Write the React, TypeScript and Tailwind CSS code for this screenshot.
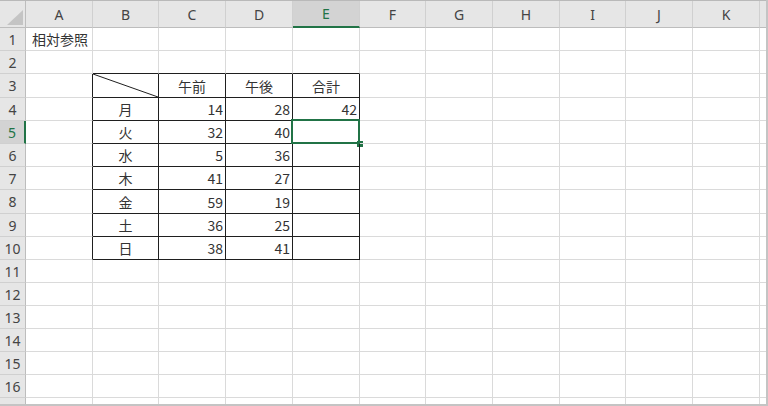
const cols = ["A", "B", "C", "D", "E", "F", "G", "H", "I", "J", "K"]
const colW = [67, 66, 67, 67, 67, 66, 67, 67, 66, 67, 67]
const rowH = [23, 23, 24, 23, 23, 23, 23, 24, 23, 23, 23, 23, 23, 23, 23, 23]

const GRID = "#dadada"
const INK = "#1f1f1f"

// cell values, keyed "C4" etc.
const cells: Record<string, { v: string; align?: "left" | "center" | "right" }> = {
  A1: { v: "相対参照", align: "left" },
  C3: { v: "午前", align: "center" },
  D3: { v: "午後", align: "center" },
  E3: { v: "合計", align: "center" },
  E4: { v: "42", align: "right" },
}

const days = ["月", "火", "水", "木", "金", "土", "日"]
const am = [14, 32, 5, 41, 59, 36, 38]
const pm = [28, 40, 36, 27, 19, 25, 41]
days.forEach((d, i) => {
  const r = i + 4
  cells[`B${r}`] = { v: d, align: "center" }
  cells[`C${r}`] = { v: String(am[i]), align: "right" }
  cells[`D${r}`] = { v: String(pm[i]), align: "right" }
})

const inTable = (c: number, r: number) => c >= 1 && c <= 4 && r >= 3 && r <= 10

export default function App() {
  return (
    <div
      className="w-[768px] h-[406px] overflow-hidden bg-white border-r-2 border-b-2 border-[#c4c4c4] text-[14px] text-[#333]"
      style={{ fontFamily: '"Noto Sans CJK JP", "Noto Sans", sans-serif' }}
    >
      {/* ===== COLUMN HEADERS ===== */}
      <div className="flex h-[28px] border-t border-[#b9b9b9]">
        <div className="w-[26px] shrink-0 bg-[#e6e6e6] border-r border-b border-[#bdbdbd] flex items-end justify-end p-[2px]">
          <svg width="16" height="15" viewBox="0 0 16 15">
            <polygon points="16,0 16,15 0,15" fill="#c4c4c4" />
          </svg>
        </div>
        {cols.map((c, i) => (
          <div
            key={c}
            style={{ width: colW[i] }}
            className={`shrink-0 flex items-center justify-center border-r border-[#d0d0d0] ${
              c === "E"
                ? "bg-[#d3d3d3] text-[#217346] border-b-2 border-b-[#217346]"
                : "bg-[#e6e6e6] text-[#444] border-b border-b-[#bdbdbd]"
            }`}
          >
            <span style={{ fontFamily: '"Noto Sans", sans-serif' }}>{c}</span>
          </div>
        ))}
        <div className="w-[7px] shrink-0 bg-[#e6e6e6] border-b border-[#bdbdbd]" />
      </div>

      {/* ===== ROWS ===== */}
      {rowH.map((h, ri) => {
        const r = ri + 1
        return (
          <div key={r} className="flex" style={{ height: h }}>
            <div
              className={`w-[26px] shrink-0 flex items-center justify-center border-b border-[#d0d0d0] ${
                r === 5
                  ? "bg-[#d3d3d3] text-[#217346] border-r-2 border-r-[#217346]"
                  : "bg-[#e6e6e6] text-[#444] border-r border-r-[#bdbdbd]"
              }`}
            >
              <span style={{ fontFamily: '"Noto Sans", sans-serif' }}>{r}</span>
            </div>
            {cols.map((c, ci) => {
              const key = `${c}${r}`
              const cell = cells[key]
              const rightDark = inTable(ci, r) || inTable(ci + 1, r)
              const bottomDark = inTable(ci, r) || inTable(ci, r + 1)
              return (
                <div
                  key={key}
                  style={{
                    width: colW[ci],
                    borderRightColor: rightDark ? INK : GRID,
                    borderBottomColor: bottomDark ? INK : GRID,
                  }}
                  className={`relative shrink-0 border-r border-b flex items-center whitespace-nowrap ${
                    cell?.align === "right"
                      ? "justify-end pr-[2px]"
                      : cell?.align === "center"
                      ? "justify-center"
                      : "justify-start pl-[6px]"
                  }`}
                >
                  {cell && <span className="leading-none">{cell.v}</span>}

                  {/* diagonal in B3 */}
                  {key === "B3" && (
                    <svg className="absolute inset-0" width="100%" height="100%">
                      <line x1="0" y1="0" x2="100%" y2="100%" stroke={INK} strokeWidth="1" />
                    </svg>
                  )}

                  {/* selection on E5 */}
                  {key === "E5" && (
                    <>
                      <div className="absolute left-[-2px] top-[-2px] right-[-1px] bottom-[-1px] border-2 border-[#217346]" />
                      <div className="absolute right-[-4px] bottom-[-4px] w-[6px] h-[6px] bg-[#217346]" />
                    </>
                  )}
                </div>
              )
            })}
            <div className="w-[7px] shrink-0 border-b" style={{ borderBottomColor: GRID }} />
          </div>
        )
      })}

      {/* ===== PARTIAL ROW 17 ===== */}
      <div className="flex h-[6px]">
        <div className="w-[26px] shrink-0 bg-[#e6e6e6] border-r border-[#bdbdbd]" />
        {cols.map((c, ci) => (
          <div key={c} style={{ width: colW[ci] }} className="shrink-0 border-r border-[#dadada]" />
        ))}
      </div>
    </div>
  )
}
